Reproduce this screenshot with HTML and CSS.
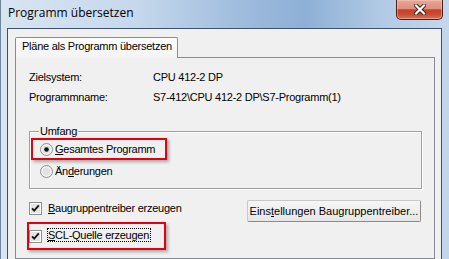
FILE: index.html
```html
<!doctype html>
<html lang="de">
    <head>
        <meta charset="utf-8">
        <title>Programm übersetzen</title>
        <link rel="stylesheet" href="styles.css">
    </head>
    <body>
        <div class="window">
            <div class="titlebar">
                <span class="title">Programm übersetzen</span>
                <span class="close">
                    <svg width="12" height="11" viewBox="0 0 12 11">
                        <path d="M2 1.5l8 8M10 1.5l-8 8" stroke="#3b1810" stroke-width="4" stroke-linecap="square"/>
                        <path d="M2 1.5l8 8M10 1.5l-8 8" stroke="#fff" stroke-width="2.2" stroke-linecap="square"/>
                    </svg>
                </span>
            </div>

            <div class="client">
                <div class="tabs">
                    <div class="tab">Pläne als Programm übersetzen</div>
                    <div class="tab-fill"></div>
                </div>

                <div class="panel">
                    <div class="info">
                        <span class="key">Zielsystem:</span>
                        <span>CPU 412-2 DP</span>
                    </div>
                    <div class="info">
                        <span class="key">Programmname:</span>
                        <span>S7-412\CPU 412-2 DP\S7-Programm(1)</span>
                    </div>

                    <div class="group">
                        <div class="group-title">Umfang</div>

                        <label class="option marked">
                            <svg class="radio" width="13" height="13" viewBox="0 0 13 13">
                                <circle cx="6.5" cy="6.5" r="6" fill="#f4f4f4" stroke="#8e8f8f"/>
                                <circle cx="6.5" cy="6.5" r="4" fill="#e2e2e2"/>
                                <circle cx="6.5" cy="6.5" r="2.3" fill="#111"/>
                            </svg>
                            <span><u>G</u>esamtes Programm</span>
                        </label>

                        <label class="option">
                            <svg class="radio" width="13" height="13" viewBox="0 0 13 13">
                                <circle cx="6.5" cy="6.5" r="6" fill="#f4f4f4" stroke="#8e8f8f"/>
                                <circle cx="6.5" cy="6.5" r="4" fill="#e2e2e2"/>
                            </svg>
                            <span>Än<u>d</u>erungen</span>
                        </label>
                    </div>

                    <div class="line">
                        <label class="check">
                            <svg class="box" width="13" height="13" viewBox="0 0 13 13">
                                <rect x="0.5" y="0.5" width="12" height="12" fill="#fff" stroke="#8e8f8f"/>
                                <rect x="2" y="2" width="9" height="9" fill="#e4e4e4"/>
                                <path d="M3 6.3l2.2 2.4 4.6-5.4" fill="none" stroke="#151515" stroke-width="1.8"/>
                            </svg>
                            <span><u>B</u>augruppentreiber erzeugen</span>
                        </label>

                        <button class="btn" type="button">Eins<u>t</u>ellungen Baugruppentreiber...</button>
                    </div>

                    <label class="check marked">
                        <svg class="box" width="13" height="13" viewBox="0 0 13 13">
                            <rect x="0.5" y="0.5" width="12" height="12" fill="#fff" stroke="#8e8f8f"/>
                            <rect x="2" y="2" width="9" height="9" fill="#e4e4e4"/>
                            <path d="M3 6.3l2.2 2.4 4.6-5.4" fill="none" stroke="#151515" stroke-width="1.8"/>
                        </svg>
                        <span class="focus"><u>S</u>CL-Quelle erzeugen</span>
                    </label>
                </div>
            </div>
        </div>
    </body>
</html>
```

FILE: styles.css
```css
* { box-sizing: border-box; }

html, body { margin: 0; }

body {
    width: 449px;
    height: 259px;
    overflow: hidden;
    font: 11px/13px "Liberation Sans", Arial, sans-serif;
    letter-spacing: -0.25px;
    color: #000;
}

.window {
    display: flex;
    flex-direction: column;
    height: 100%;
    padding: 0 7px 0 6px;
    border-left: 1px solid #6f8399;
    background: linear-gradient(to right, #d8e5f2 0%, #c6d8ec 30%, #98b7da 58%, #8eb0d6 68%, #b3cbe5 86%, #c3d7ec 100%);
}

/* title bar */

.titlebar {
    display: flex;
    justify-content: space-between;
    align-items: flex-start;
    height: 28px;
    flex: none;
}

.title {
    padding: 5px 0 0 1px;
    font: 12px/16px "Open Sans", "Noto Sans", sans-serif;
    letter-spacing: 0;
}

.close {
    display: flex;
    align-items: center;
    justify-content: center;
    width: 47px;
    height: 20px;
    margin-right: -1px;
    border: 1px solid #4e1d14;
    border-top: none;
    border-radius: 0 0 5px 5px;
    background: linear-gradient(#e8a898 0%, #dd8f7c 45%, #c4412b 52%, #c94a30 75%, #d9735a 100%);
    box-shadow: inset 0 0 0 1px rgba(255, 210, 200, .45);
}

/* client area */

.client {
    flex: 1;
    display: flex;
    flex-direction: column;
    padding: 8px 6px 0 7px;
    border: 1px solid #3f5166;
    border-bottom: none;
    background: #f0f0f0;
}

.tabs {
    display: flex;
    height: 21px;
    flex: none;
}

.tab {
    width: 163px;
    padding: 0 0 0 6px;
    line-height: 17px;
    border: 1px solid #898c95;
    border-bottom: none;
    border-radius: 2px 2px 0 0;
    background: linear-gradient(#fcfcfc, #f4f4f4);
    white-space: nowrap;
}

.tab-fill {
    flex: 1;
    border-bottom: 1px solid #898c95;
}

.panel {
    flex: 1;
    padding: 9px 12px 0 13px;
    border: 1px solid #898c95;
    border-top: none;
}

.info {
    display: flex;
    line-height: 20px;
}

.info .key {
    width: 124px;
}

/* group box */

.group {
    margin-top: 24px;
    padding: 0 0 6px 1px;
    border: 1px solid #a0a0a0;
    box-shadow: 1px 1px 0 #fff, inset 1px 1px 0 #fff;
}

.group-title {
    width: max-content;
    margin: -7px 0 0 8px;
    padding: 0 1px;
    background: #f0f0f0;
}

.option {
    display: flex;
    align-items: center;
    width: 136px;
    height: 22px;
    padding-left: 7px;
    border: 2px solid transparent;
}

.radio {
    margin-right: 2px;
}

/* checkboxes and button */

.line {
    display: flex;
    align-items: flex-start;
    margin-top: 8px;
}

.check {
    display: flex;
    align-items: center;
    height: 22px;
    margin-left: -2px;
    border: 2px solid transparent;
}

.box {
    margin-right: 6px;
    flex: none;
}

.check.marked {
    width: 139px;
    height: 28px;
}

.check.marked .box {
    margin-right: 5px;
}

.focus {
    margin-bottom: 2px;
    padding-right: 1px;
    line-height: 12px;
    border: 1px dotted #000;
}

.marked {
    border-color: #e4000f;
    box-shadow: 2px 2px 3px rgba(0, 0, 0, .3);
}

.btn {
    width: 174px;
    height: 22px;
    margin: 3px 1px 0 auto;
    padding: 0;
    font: inherit;
    color: #000;
    border: 1px solid #8a8a8a;
    border-color: #c8c8c8 #8a8a8a #8a8a8a #c8c8c8;
    border-radius: 2px;
    background: linear-gradient(#f6f6f6, #e6e6e6);
}
```
